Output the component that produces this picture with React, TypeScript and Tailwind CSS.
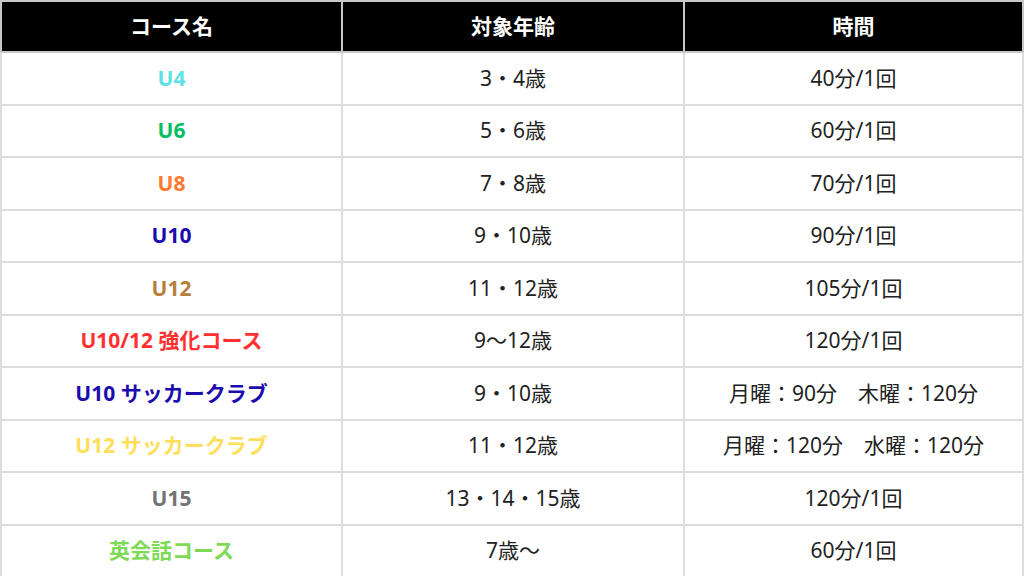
const rows = [
  { name: "U4", color: "text-[#5ce1e6]", age: "3・4歳", time: "40分/1回" },
  { name: "U6", color: "text-[#00bf63]", age: "5・6歳", time: "60分/1回" },
  { name: "U8", color: "text-[#ff7a30]", age: "7・8歳", time: "70分/1回" },
  { name: "U10", color: "text-[#1c0cae]", age: "9・10歳", time: "90分/1回" },
  { name: "U12", color: "text-[#b5803c]", age: "11・12歳", time: "105分/1回" },
  { name: "U10/12 強化コース", color: "text-[#ff3131]", age: "9〜12歳", time: "120分/1回" },
  { name: "U10 サッカークラブ", color: "text-[#1c0cae]", age: "9・10歳", time: "月曜：90分　木曜：120分" },
  { name: "U12 サッカークラブ", color: "text-[#ffde59]", age: "11・12歳", time: "月曜：120分　水曜：120分" },
  { name: "U15", color: "text-[#737373]", age: "13・14・15歳", time: "120分/1回" },
  { name: "英会話コース", color: "text-[#7ed957]", age: "7歳〜", time: "60分/1回" },
];

export default function App() {
  return (
    <div className="w-[1024px] h-[576px] bg-white font-['Noto_Sans','Noto_Sans_CJK_JP',sans-serif]">
      <table className="w-full h-full border-collapse table-fixed text-[21px]">
        <thead>
          <tr className="h-[51px] bg-black text-white font-bold">
            <th className="border-2 border-[#c8c8c8] w-[341px]">コース名</th>
            <th className="border-2 border-[#c8c8c8] w-[342px]">対象年齢</th>
            <th className="border-2 border-[#c8c8c8]">時間</th>
          </tr>
        </thead>
        <tbody>
          {rows.map((row, index) => (
            <tr key={index} className="h-[52.5px]">
              <td className={`border-2 border-[#dddddd] text-center font-bold ${row.color}`}>
                {row.name}
              </td>
              <td className="border-2 border-[#dddddd] text-center text-[#222]">{row.age}</td>
              <td className="border-2 border-[#dddddd] text-center text-[#222]">{row.time}</td>
            </tr>
          ))}
        </tbody>
      </table>
    </div>
  );
}
